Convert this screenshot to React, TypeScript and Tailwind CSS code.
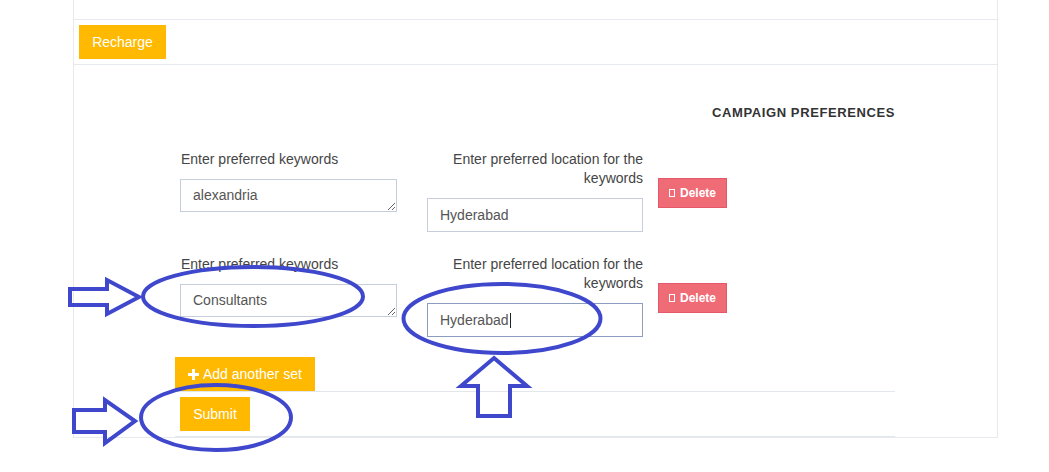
import React from "react";

type PrefRow = {
  keyword: string;
  location: string;
  focused?: boolean;
};

const rows: PrefRow[] = [
  { keyword: "alexandria", location: "Hyderabad" },
  { keyword: "Consultants", location: "Hyderabad", focused: true },
];

function DeleteButton() {
  return (
    <button
      type="button"
      className="mt-[28px] ml-[15px] flex h-[30px] w-[69px] items-center justify-center gap-[5px] border border-[#e4596a] bg-[#ef6b76] text-[12px] font-bold text-white"
    >
      <span className="inline-block h-[8px] w-[6px] border border-white" />
      Delete
    </button>
  );
}

function PreferenceRow({ row }: { row: PrefRow }) {
  return (
    <div className="flex items-start pl-[5px]">
      <div className="w-[217px]">
        <label className="mb-[10px] block pl-[1px] text-[14px] leading-[19px] text-[#454545]">
          Enter preferred keywords
        </label>
        <textarea
          rows={1}
          defaultValue={row.keyword}
          className="block h-[33px] w-[217px] overflow-hidden border border-[#c6cedb] px-[12px] pt-[6px] text-[14px] leading-[19px] text-[#555] outline-none"
        />
      </div>
      <div className="ml-[30px] w-[216px]">
        <label className="mb-[10px] block text-right text-[14px] leading-[19px] text-[#454545]">
          Enter preferred location for the keywords
        </label>
        {row.focused ? (
          <div className="flex h-[34px] w-[216px] items-center border border-[#8d9dc0] px-[12px] text-[14px] text-[#555]">
            {row.location}
            <span className="ml-[1px] inline-block h-[15px] w-[1px] bg-[#222]" />
          </div>
        ) : (
          <input
            type="text"
            defaultValue={row.location}
            className="block h-[34px] w-[216px] border border-[#c6cedb] px-[12px] text-[14px] text-[#555] outline-none"
          />
        )}
      </div>
      <DeleteButton />
    </div>
  );
}

// hand-drawn markers laid over the form
function Markers() {
  const stroke = "#3f48cc";
  return (
    <svg
      className="pointer-events-none absolute left-0 top-0"
      width={1049}
      height={472}
      fill="none"
      stroke={stroke}
      strokeWidth={4}
    >
      <polygon points="70,289 107,289 107,280 139,297 107,314 107,305 70,305" />
      <ellipse cx={253} cy={296.5} rx={110} ry={29.5} />
      <ellipse cx={502} cy={318.5} rx={98.5} ry={34.5} />
      <polygon points="494,358 527,386 510,386 510,416 478,416 478,386 461,386" />
      <ellipse cx={216} cy={417.5} rx={75} ry={32.5} />
      <polygon points="74,410 105,410 105,400 135,421 105,443 105,432 74,432" />
    </svg>
  );
}

export default function App() {
  return (
    <div className="relative h-[472px] w-[1049px] overflow-hidden bg-white font-['Liberation_Sans',Arial,sans-serif]">
      <div className="ml-[73px] w-[925px] border-x border-b border-[#e6e9ed]">
        <div className="h-[20px] border-b border-[#e6e9ed]" />

        <div className="h-[45px] border-b border-[#e6e9ed] pl-[5px] pt-[5px]">
          <button
            type="button"
            className="h-[34px] w-[87px] bg-[#ffb900] text-[14px] text-white"
          >
            Recharge
          </button>
        </div>

        <div className="pl-[101px] pt-[39px]">
          <div className="w-[720px]">
            <h3 className="text-right text-[13px] font-bold leading-[17px] tracking-[0.6px] text-[#333]">
              CAMPAIGN PREFERENCES
            </h3>

            <div className="mt-[29px] flex flex-col gap-[23px]">
              {rows.map((row, i) => (
                <PreferenceRow key={i} row={row} />
              ))}
            </div>

            <button
              type="button"
              className="mt-[20px] flex h-[34px] w-[140px] items-center gap-[4px] bg-[#ffb900] pl-[13px] text-[14px] text-white"
            >
              <svg width="11" height="11" viewBox="0 0 11 11" fill="white">
                <rect x="4" y="0" width="3" height="11" />
                <rect x="0" y="4" width="11" height="3" />
              </svg>
              Add another set
            </button>

            <div className="border-y border-[#e3e7ec] px-[5px] py-[5px]">
              <button
                type="button"
                className="h-[34px] w-[70px] bg-[#ffb900] text-[14px] text-white"
              >
                Submit
              </button>
            </div>
          </div>
        </div>
      </div>

      <Markers />
    </div>
  );
}
